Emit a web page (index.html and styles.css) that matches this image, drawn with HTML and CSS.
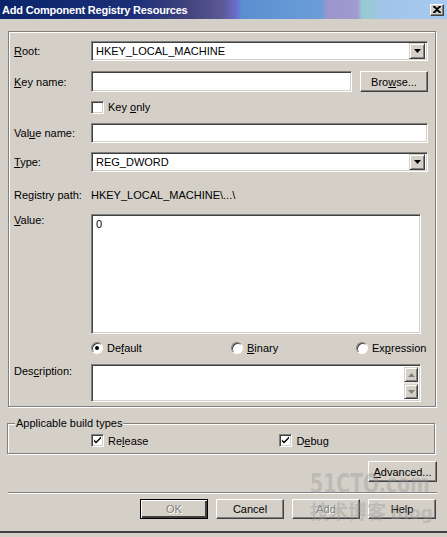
FILE: index.html
```html
<!DOCTYPE html>
<html lang="en">
<head>
    <meta charset="UTF-8">
    <title>Add Component Registry Resources</title>
    <link rel="stylesheet" href="styles.css">
</head>
<body>
<div class="window">
    <div class="titlebar">
        <span class="title">Add Component Registry Resources</span>
        <span class="close">
            <svg width="8" height="7" viewBox="0 0 8 7"><path d="M0 0h2l2 2 2-2h2v1L5 3.5 8 6v1H6L4 5 2 7H0V6l3-2.5L0 1z" fill="#000"/></svg>
        </span>
    </div>

    <div class="client">
        <div class="panel">
            <div class="row r-root">
                <label class="lbl"><u>R</u>oot:</label>
                <div class="field select">
                    <span class="val">HKEY_LOCAL_MACHINE</span>
                    <span class="drop"><svg width="7" height="4" viewBox="0 0 7 4"><path d="M0 0h7L3.5 4z" fill="#000"/></svg></span>
                </div>
            </div>
            <div class="row r-key">
                <label class="lbl"><u>K</u>ey name:</label>
                <div class="field input grow"></div>
                <button class="btn browse">Bro<u>w</u>se...</button>
            </div>
            <div class="row r-only">
                <span class="lbl"></span>
                <span class="check"></span>
                <span class="opt">Key <u>o</u>nly</span>
            </div>
            <div class="row r-vname">
                <label class="lbl">Val<u>u</u>e name:</label>
                <div class="field input grow"></div>
            </div>
            <div class="row r-type">
                <label class="lbl"><u>T</u>ype:</label>
                <div class="field select">
                    <span class="val">REG_DWORD</span>
                    <span class="drop"><svg width="7" height="4" viewBox="0 0 7 4"><path d="M0 0h7L3.5 4z" fill="#000"/></svg></span>
                </div>
            </div>
            <div class="row r-path">
                <span class="lbl">Registry path:</span>
                <span class="path">HKEY_LOCAL_MACHINE\...\</span>
            </div>
            <div class="row r-value">
                <label class="lbl"><u>V</u>alue:</label>
                <div class="field area value-area"><span class="val">0</span></div>
            </div>
            <div class="row r-radios">
                <span class="lbl"></span>
                <div class="radios">
                    <span class="radio-item first"><span class="radio on"></span><span class="opt">De<u>f</u>ault</span></span>
                    <span class="radio-item second"><span class="radio"></span><span class="opt"><u>B</u>inary</span></span>
                    <span class="radio-item"><span class="radio"></span><span class="opt">Ex<u>p</u>ression</span></span>
                </div>
            </div>
            <div class="row r-desc">
                <label class="lbl">Des<u>c</u>ription:</label>
                <div class="field area desc-area">
                    <div class="vscroll">
                        <span class="arrow"><svg width="7" height="4" viewBox="0 0 7 4"><path d="M3.5 0L7 4H0z" fill="#808080"/></svg></span>
                        <span class="track"></span>
                        <span class="arrow"><svg width="7" height="4" viewBox="0 0 7 4"><path d="M0 0h7L3.5 4z" fill="#808080"/></svg></span>
                    </div>
                </div>
            </div>
        </div>

        <div class="group">
            <span class="legend">Applicable build types</span>
            <div class="group-row">
                <span class="check-item"><span class="check on"><svg width="9" height="9" viewBox="0 0 9 9"><path d="M1 3.5l2 2 5-5v2l-5 5-2-2z" fill="#000"/></svg></span><span class="opt">Re<u>l</u>ease</span></span>
                <span class="check-item debug"><span class="check on"><svg width="9" height="9" viewBox="0 0 9 9"><path d="M1 3.5l2 2 5-5v2l-5 5-2-2z" fill="#000"/></svg></span><span class="opt">D<u>e</u>bug</span></span>
            </div>
        </div>

        <div class="adv-row">
            <button class="btn"><u>A</u>dvanced...</button>
        </div>

        <div class="sep"></div>

        <div class="btn-row">
            <button class="btn default disabled">OK</button>
            <button class="btn">Cancel</button>
            <button class="btn disabled">Add</button>
            <button class="btn">Help</button>
        </div>
    </div>

    <div class="watermark">
        <span class="wm-big">51CTO.com</span>
        <span class="wm-small">技术博客 <span class="wm-blog">Blog</span></span>
    </div>
</div>
</body>
</html>
```

FILE: styles.css
```css
body {
    margin: 0;
    padding: 0;
    background-color: #d4d0c8;
    font-family: "Liberation Sans", Arial, sans-serif;
    font-size: 11px;
    color: #000;
}

.window {
    position: relative;
    width: 447px;
    height: 537px;
    box-sizing: border-box;
    background-color: #d4d0c8;
    border-bottom: 4px solid #d4d0c8;
    box-shadow: inset 0 -2px 0 #404040;
    overflow: hidden;
}

.titlebar {
    height: 19px;
    display: flex;
    align-items: center;
    justify-content: space-between;
    padding: 0 3px 0 2px;
    background: linear-gradient(to right, #0a246a 0%, #1c2f78 30%, #45457f 43%, #5d5a98 50%, #6a6fd0 53%, #5a8fd0 54%, #6b9ed8 72%, #9b95cc 73%, #a29bd2 80%, #94cbd0 81%, #a2c4ea 86%, #a6caf0 100%);
}

.title {
    color: #fff;
    font-weight: bold;
    font-size: 11px;
    letter-spacing: -0.2px;
}

.close {
    width: 14px;
    height: 12px;
    box-sizing: border-box;
    display: flex;
    align-items: center;
    justify-content: center;
    background-color: #d4d0c8;
    border: 1px solid;
    border-color: #fff #404040 #404040 #fff;
    box-shadow: inset -1px -1px #808080;
}

.client {
    padding: 12px 11px 0 8px;
    display: flex;
    flex-direction: column;
}

.panel {
    border: 1px solid #808080;
    box-shadow: 1px 1px 0 #fff, inset 1px 1px 0 #fff;
    padding: 9px 7px 4px 5px;
    display: flex;
    flex-direction: column;
}

.row {
    display: flex;
    align-items: center;
}

.lbl {
    width: 77px;
    flex-shrink: 0;
}

.field {
    box-sizing: border-box;
    background-color: #fff;
    border: 1px solid;
    border-color: #808080 #fff #fff #808080;
    box-shadow: inset 1px 1px #404040, inset -1px -1px #d4d0c8;
}

.grow {
    flex: 1;
}

.select {
    flex: 1;
    height: 20px;
    display: flex;
    align-items: center;
    justify-content: space-between;
    padding: 2px;
}

.select .val {
    padding-left: 2px;
}

.drop {
    width: 16px;
    height: 16px;
    box-sizing: border-box;
    display: flex;
    align-items: center;
    justify-content: center;
    background-color: #d4d0c8;
    border: 1px solid;
    border-color: #d4d0c8 #404040 #404040 #d4d0c8;
    box-shadow: inset 1px 1px #fff, inset -1px -1px #808080;
}

.input {
    height: 21px;
}

.btn {
    font-family: "Liberation Sans", Arial, sans-serif;
    font-size: 11px;
    color: #000;
    width: 68px;
    height: 21px;
    padding: 0;
    box-sizing: border-box;
    background-color: #d4d0c8;
    border: 1px solid;
    border-color: #fff #404040 #404040 #fff;
    box-shadow: inset -1px -1px #808080;
}

.btn.default {
    border: 1px solid #000;
    box-shadow: inset 1px 1px #fff, inset -2px -2px #404040, inset -1px -1px #808080;
}

.btn.disabled {
    color: #808080;
    text-shadow: 1px 1px 0 #fff;
}

.browse {
    margin-left: 8px;
}

.r-root {
    height: 20px;
}

.r-key {
    margin-top: 10px;
}

.r-only {
    margin-top: 8px;
    height: 14px;
}

.check {
    width: 13px;
    height: 13px;
    box-sizing: border-box;
    display: inline-flex;
    align-items: center;
    justify-content: center;
    background-color: #fff;
    border: 1px solid;
    border-color: #808080 #fff #fff #808080;
    box-shadow: inset 1px 1px #404040, inset -1px -1px #d4d0c8;
    flex-shrink: 0;
}

.opt {
    margin-left: 4px;
}

.r-vname {
    margin-top: 9px;
}

.r-vname .input {
    height: 20px;
}

.r-type {
    margin-top: 9px;
}

.r-path {
    margin-top: 15px;
    height: 16px;
}

.r-value {
    margin-top: 11px;
    align-items: flex-start;
}

.area {
    width: 330px;
}

.value-area {
    height: 120px;
    padding: 3px 4px;
}

.r-radios {
    margin-top: 7px;
    height: 14px;
}

.radios {
    flex: 1;
    display: flex;
}

.radio-item {
    display: inline-flex;
    align-items: center;
}

.radio-item.first {
    width: 140px;
}

.radio-item.second {
    width: 125px;
}

.radio {
    width: 12px;
    height: 12px;
    box-sizing: border-box;
    border-radius: 50%;
    background-color: #fff;
    border: 1px solid;
    border-color: #808080 #fff #fff #808080;
    box-shadow: inset 1px 1px #404040;
    display: inline-flex;
    align-items: center;
    justify-content: center;
}

.radio.on::after {
    content: "";
    width: 4px;
    height: 4px;
    border-radius: 50%;
    background-color: #000;
}

.r-desc {
    margin-top: 9px;
    align-items: flex-start;
}

.r-desc .lbl {
    padding-top: 1px;
}

.desc-area {
    height: 38px;
    display: flex;
    justify-content: flex-end;
    padding: 2px;
}

.vscroll {
    width: 14px;
    display: flex;
    flex-direction: column;
}

.arrow {
    height: 15px;
    box-sizing: border-box;
    display: flex;
    align-items: center;
    justify-content: center;
    background-color: #d4d0c8;
    border: 1px solid;
    border-color: #d4d0c8 #404040 #404040 #d4d0c8;
    box-shadow: inset 1px 1px #fff, inset -1px -1px #808080;
}

.track {
    flex: 1;
    background-color: #e8e6e2;
}

.group {
    position: relative;
    margin-top: 16px;
    margin-right: 1px;
    height: 31px;
    box-sizing: border-box;
    border: 1px solid #808080;
    box-shadow: 1px 1px 0 #fff, inset 1px 1px 0 #fff;
    margin-left: -1px;
}

.legend {
    position: absolute;
    top: -7px;
    left: 7px;
    padding: 0 1px;
    background-color: #d4d0c8;
}

.group-row {
    display: flex;
    padding: 10px 0 0 83px;
}

.check-item {
    display: inline-flex;
    align-items: center;
}

.check-item.debug {
    margin-left: 131px;
}

.adv-row {
    display: flex;
    justify-content: flex-end;
    margin-top: 7px;
    margin-right: -1px;
}

.adv-row .btn {
    width: 69px;
}

.sep {
    margin-top: 10px;
    height: 1px;
    background-color: #808080;
    box-shadow: 0 1px 0 #fff;
    margin-right: -1px;
}

.btn-row {
    display: flex;
    justify-content: flex-end;
    gap: 8px;
    margin-top: 6px;
}

.btn-row .btn {
    height: 20px;
}

.watermark {
    position: absolute;
    left: 310px;
    top: 468px;
    width: 127px;
    display: flex;
    flex-direction: column;
    color: rgba(150, 150, 150, 0.4);
    pointer-events: none;
}

.wm-big {
    font-family: "DejaVu Sans", sans-serif;
    font-size: 27px;
    font-weight: bold;
    line-height: 31px;
    white-space: nowrap;
    transform: scaleX(0.7);
    transform-origin: left;
}

.wm-small {
    font-family: "Noto Sans CJK SC", sans-serif;
    font-size: 19px;
    font-weight: bold;
    line-height: 24px;
    white-space: nowrap;
}

.wm-blog {
    font-family: "DejaVu Sans", sans-serif;
    font-size: 17px;
}
```
